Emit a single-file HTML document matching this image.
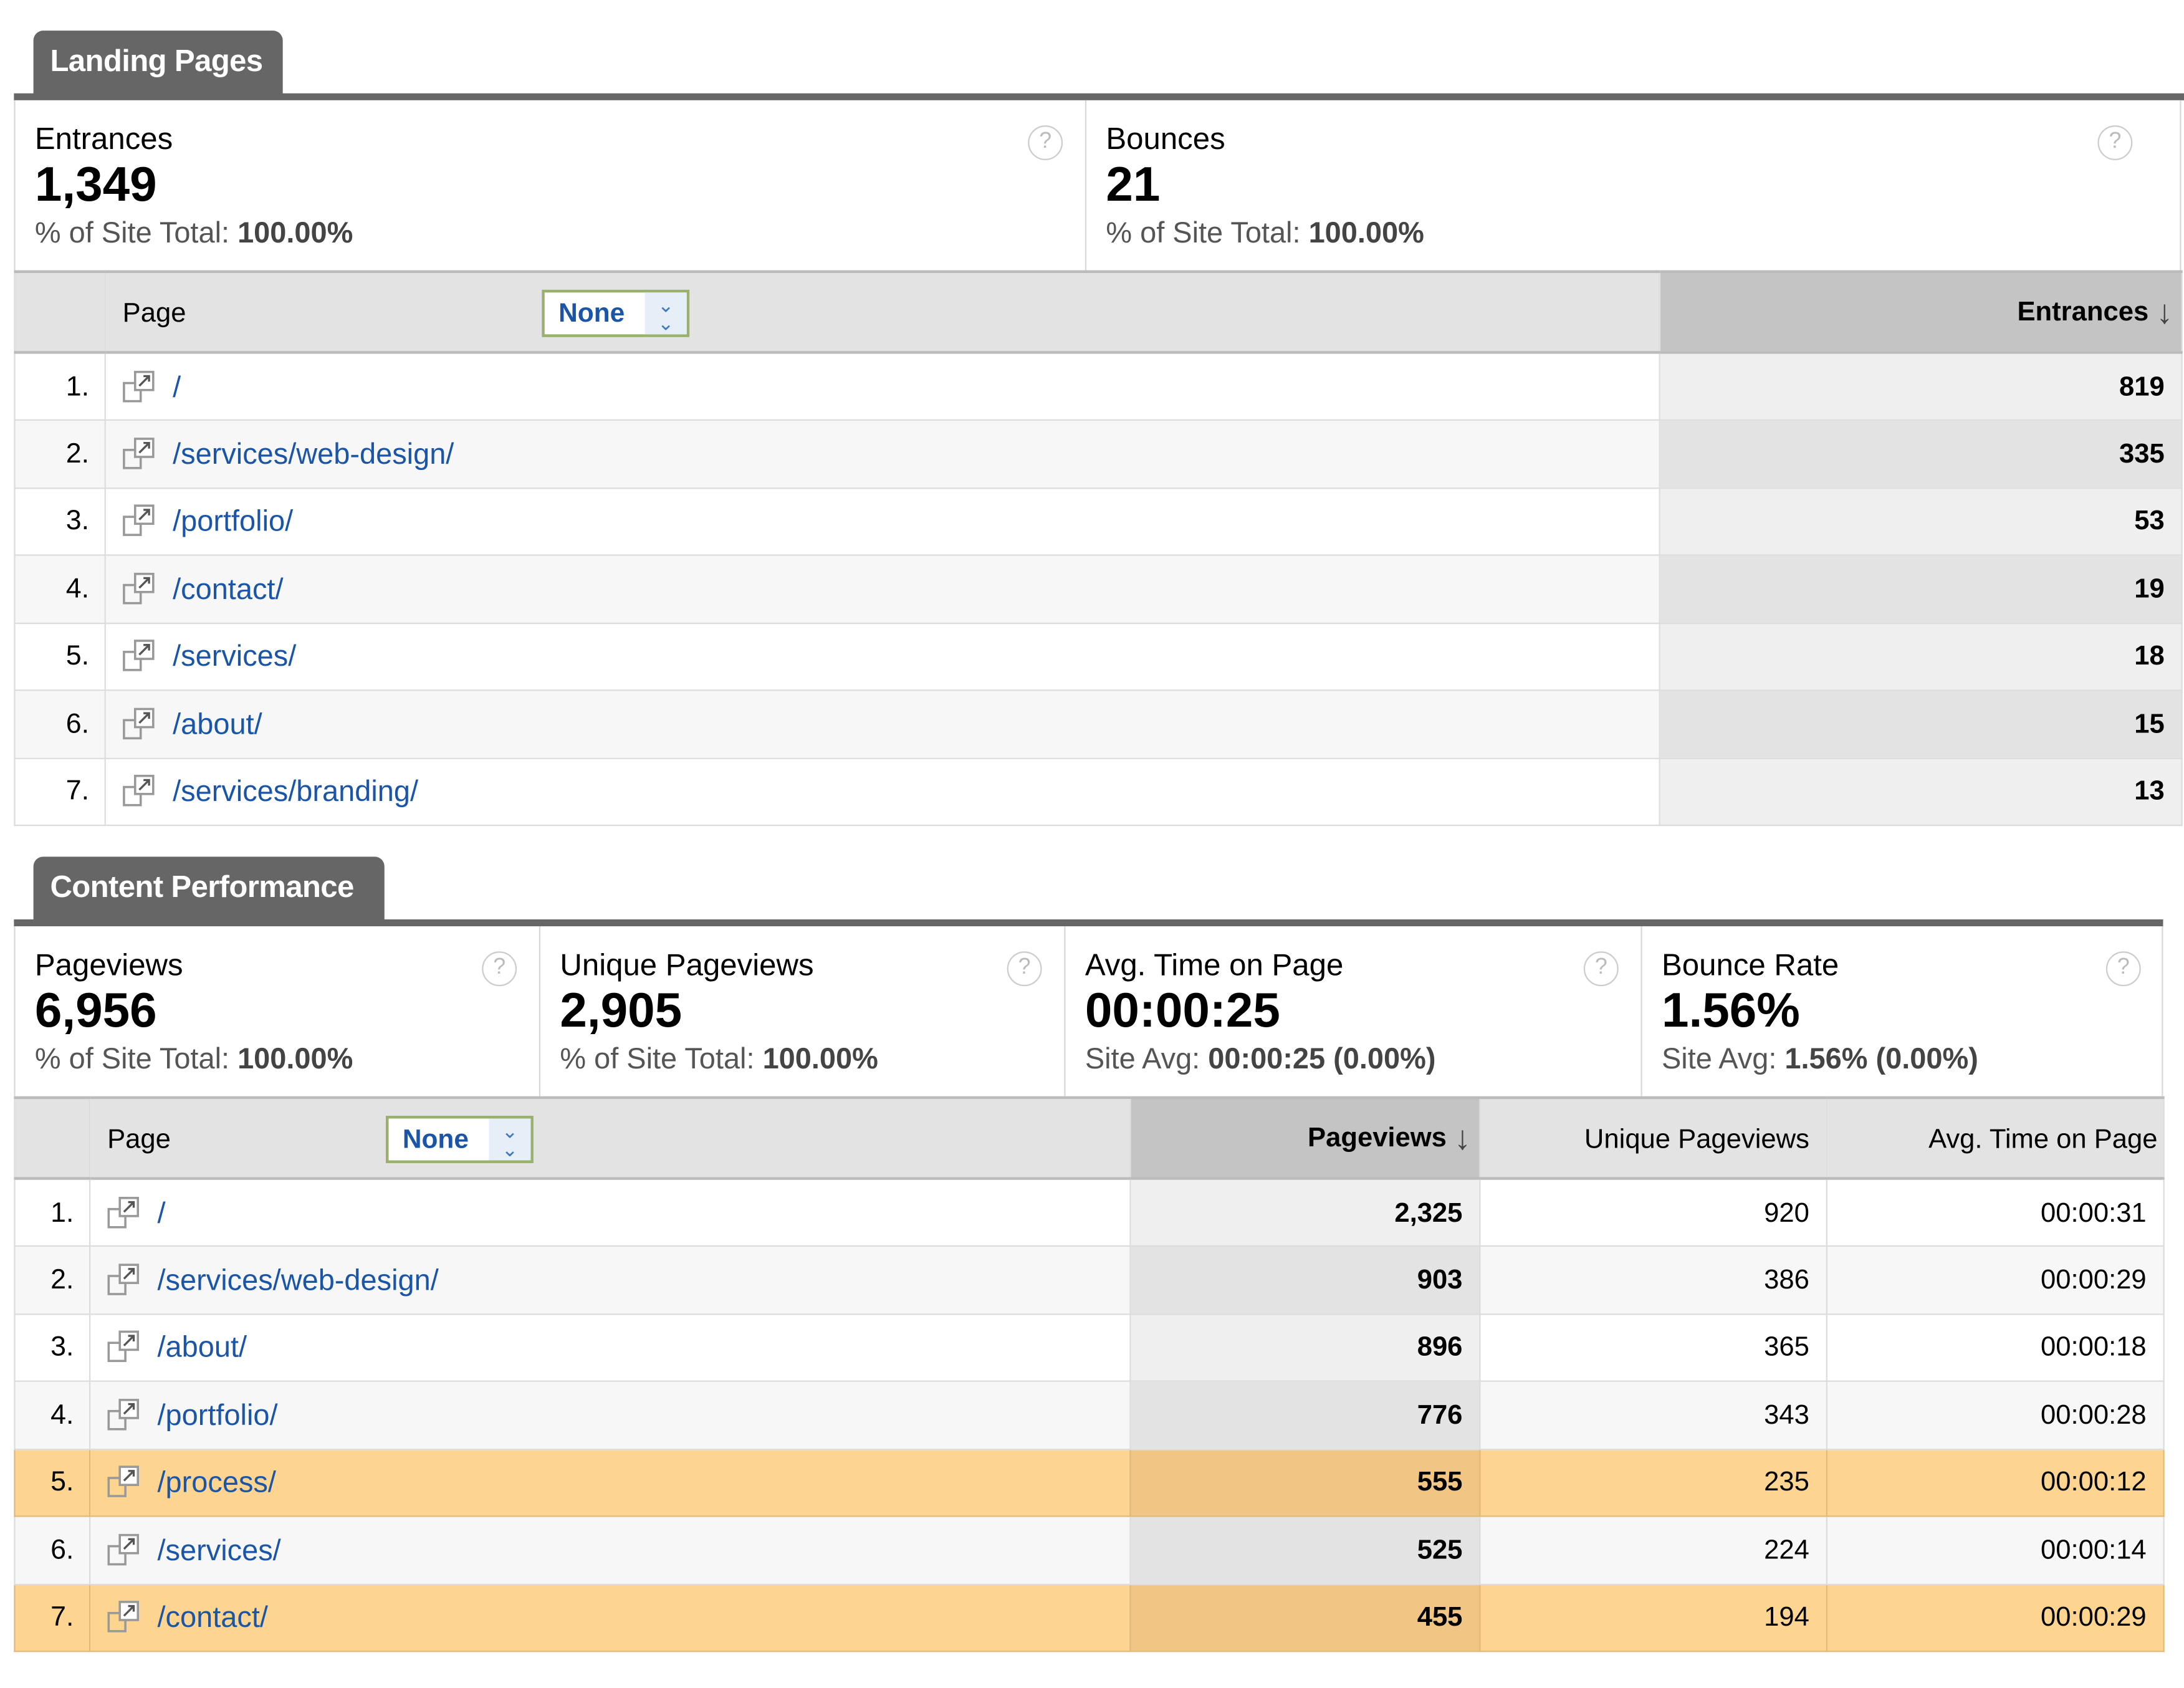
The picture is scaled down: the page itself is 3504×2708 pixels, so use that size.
<!DOCTYPE html>
<html><head><meta charset="utf-8"><style>
*{margin:0;padding:0;box-sizing:border-box}
body{width:3504px;height:2708px;background:#fff;overflow:hidden;font-family:"Liberation Sans",Arial,sans-serif;color:#000}
#w{position:absolute;left:0;top:0;width:1568px;height:1212px;transform:scale(2.2347);transform-origin:0 0}
.tab{position:absolute;background:#666;color:#fff;font-weight:bold;font-size:22px;border-radius:7px 7px 0 0;padding:9px 0 0 12px;letter-spacing:-0.3px}
.bar{position:absolute;height:5px;background:#666}
.mbox{position:absolute;border-left:1px solid #d8d8d8;border-right:1px solid #d8d8d8;background:#fff}
.m{position:absolute;top:0;height:100%;border-left:1px solid #d8d8d8;padding:15px 0 0 14px}
.m:first-child{border-left:none}
.lab{font-size:22px;line-height:26px}
.num{font-size:35px;font-weight:bold;line-height:36px;margin-top:2px}
.sub{font-size:21px;color:#555;line-height:26px;margin-top:4px}
.sub b{color:#444}
.q{position:absolute;top:18px;width:25px;height:25px;border:1.5px solid #ccc;border-radius:50%;color:#bbb;font-size:16px;text-align:center;line-height:22px}
table{position:absolute;border-collapse:collapse;table-layout:fixed}
td,th{border:1px solid #dcdcdc;font-size:19.5px;white-space:nowrap;overflow:hidden}
th{background:#e3e3e3;font-weight:normal;height:58px;border-top:2px solid #bbb;border-bottom:2px solid #bbb;text-align:right;padding-right:12px;padding-top:2px}
th.s{background:#c4c4c4;font-weight:bold}
th.p{text-align:left;padding-left:12px;position:relative}
td{height:48.5px;text-align:right;padding-right:12px;padding-top:1px}
td.i{padding-right:11px;font-size:20px}
td.p{text-align:left;padding-left:12px;color:#1a55a8;font-size:21px}
tr:nth-child(even) td{background:#fff}
tr:nth-child(odd) td{background:#f7f7f7}
tr:nth-child(even) td.s{background:#efefef}
tr:nth-child(odd) td.s{background:#e3e3e3}
td.s{font-weight:bold}
tr.o td{background:#fdd590!important;border-color:#e0b878}
tr.o td.s{background:#f1c684!important}
.ic{display:inline-block;width:24px;height:24px;vertical-align:-5px;margin-right:12px}
.none{position:absolute;top:12px;width:106px;height:34px;border:2px solid #9ab06d;background:#fff;color:#1a55a8;font-weight:bold;font-size:19px;padding:5px 0 0 10px}
.none span{position:absolute;right:0;top:0;width:30px;height:100%;background:#e6eef8;color:#4477bb;font-size:14px;line-height:13px;text-align:center;padding-top:3px;font-weight:normal}
.arr{font-weight:bold;font-size:24px;color:#444;vertical-align:-2px}
</style></head><body><div id="w">

<svg width="0" height="0" style="position:absolute"><defs><symbol id="ic" viewBox="0 0 24 24"><rect x="1" y="9" width="12" height="13" fill="none" stroke="#999" stroke-width="1.6"/><rect x="9" y="1" width="13" height="13" fill="#fff" stroke="#999" stroke-width="1.6"/><path d="M12 11 L19 4 M15 4 H19 V8" fill="none" stroke="#555" stroke-width="1.5"/></symbol></defs></svg>

<div class="tab" style="left:24px;top:22px;width:179px;height:46px">Landing Pages</div>
<div class="bar" style="left:10px;top:67px;width:1558px"></div>
<div class="mbox" style="left:10px;top:72px;width:1556px;height:122px">
 <div class="m" style="left:0;width:768px"><div class="lab">Entrances</div><div class="num">1,349</div><div class="sub">% of Site Total: <b>100.00%</b></div><div class="q" style="left:727px">?</div></div>
 <div class="m" style="left:768px;width:787px"><div class="lab">Bounces</div><div class="num">21</div><div class="sub">% of Site Total: <b>100.00%</b></div><div class="q" style="left:726px">?</div></div>
</div>
<table style="left:10px;top:194px;width:1556px">
<colgroup><col style="width:65px"><col style="width:1116px"><col style="width:375px"></colgroup>
<tr><th></th><th class="p">Page<div class="none" style="left:313px">None<span>&#8964;<br>&#8964;</span></div></th><th class="s" style="padding-right:6px">Entrances <span class="arr">&#8595;</span></th></tr>
<tr><td class="i">1.</td><td class="p"><svg class="ic"><use href="#ic"/></svg>/</td><td class="s">819</td></tr>
<tr><td class="i">2.</td><td class="p"><svg class="ic"><use href="#ic"/></svg>/services/web-design/</td><td class="s">335</td></tr>
<tr><td class="i">3.</td><td class="p"><svg class="ic"><use href="#ic"/></svg>/portfolio/</td><td class="s">53</td></tr>
<tr><td class="i">4.</td><td class="p"><svg class="ic"><use href="#ic"/></svg>/contact/</td><td class="s">19</td></tr>
<tr><td class="i">5.</td><td class="p"><svg class="ic"><use href="#ic"/></svg>/services/</td><td class="s">18</td></tr>
<tr><td class="i">6.</td><td class="p"><svg class="ic"><use href="#ic"/></svg>/about/</td><td class="s">15</td></tr>
<tr><td class="i">7.</td><td class="p"><svg class="ic"><use href="#ic"/></svg>/services/branding/</td><td class="s">13</td></tr>
</table>

<div class="tab" style="left:24px;top:615px;width:252px;height:46px">Content Performance</div>
<div class="bar" style="left:10px;top:660px;width:1543px"></div>
<div class="mbox" style="left:10px;top:665px;width:1543px;height:122px">
 <div class="m" style="left:0;width:376px"><div class="lab">Pageviews</div><div class="num">6,956</div><div class="sub">% of Site Total: <b>100.00%</b></div><div class="q" style="left:335px">?</div></div>
 <div class="m" style="left:376px;width:377px"><div class="lab">Unique Pageviews</div><div class="num">2,905</div><div class="sub">% of Site Total: <b>100.00%</b></div><div class="q" style="left:335px">?</div></div>
 <div class="m" style="left:753px;width:414px"><div class="lab">Avg. Time on Page</div><div class="num">00:00:25</div><div class="sub">Site Avg: <b>00:00:25 (0.00%)</b></div><div class="q" style="left:372px">?</div></div>
 <div class="m" style="left:1167px;width:375px"><div class="lab">Bounce Rate</div><div class="num">1.56%</div><div class="sub">Site Avg: <b>1.56% (0.00%)</b></div><div class="q" style="left:333px">?</div></div>
</div>
<table style="left:10px;top:787px;width:1543px">
<colgroup><col style="width:54px"><col style="width:747px"><col style="width:251px"><col style="width:249px"><col style="width:242px"></colgroup>
<tr><th></th><th class="p">Page<div class="none" style="left:212px">None<span>&#8964;<br>&#8964;</span></div></th><th class="s" style="padding-right:6px">Pageviews <span class="arr">&#8595;</span></th><th>Unique Pageviews</th><th style="padding-right:4px">Avg. Time on Page</th></tr>
<tr><td class="i">1.</td><td class="p"><svg class="ic"><use href="#ic"/></svg>/</td><td class="s">2,325</td><td>920</td><td>00:00:31</td></tr>
<tr><td class="i">2.</td><td class="p"><svg class="ic"><use href="#ic"/></svg>/services/web-design/</td><td class="s">903</td><td>386</td><td>00:00:29</td></tr>
<tr><td class="i">3.</td><td class="p"><svg class="ic"><use href="#ic"/></svg>/about/</td><td class="s">896</td><td>365</td><td>00:00:18</td></tr>
<tr><td class="i">4.</td><td class="p"><svg class="ic"><use href="#ic"/></svg>/portfolio/</td><td class="s">776</td><td>343</td><td>00:00:28</td></tr>
<tr class="o"><td class="i">5.</td><td class="p"><svg class="ic"><use href="#ic"/></svg>/process/</td><td class="s">555</td><td>235</td><td>00:00:12</td></tr>
<tr><td class="i">6.</td><td class="p"><svg class="ic"><use href="#ic"/></svg>/services/</td><td class="s">525</td><td>224</td><td>00:00:14</td></tr>
<tr class="o"><td class="i">7.</td><td class="p"><svg class="ic"><use href="#ic"/></svg>/contact/</td><td class="s">455</td><td>194</td><td>00:00:29</td></tr>
</table>
</div></body></html>
